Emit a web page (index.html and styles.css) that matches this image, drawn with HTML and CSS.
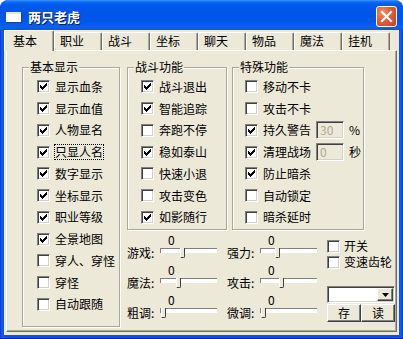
FILE: index.html
```html
<!DOCTYPE html>
<html lang="zh-CN">
<head>
<meta charset="utf-8">
<title>两只老虎</title>
<link rel="stylesheet" href="styles.css">
</head>
<body>
<svg class="defs" width="0" height="0" aria-hidden="true">
  <symbol id="check" viewBox="0 0 11 11">
    <path d="M8 2h1v1h-1z M7 3h2v1h-2z M2 4h1v1h-1z M6 4h3v1h-3z M2 5h2v1h-2z M5 5h3v1h-3z M2 6h5v1h-5z M3 7h3v1h-3z M4 8h1v1h-1z" fill="#000" shape-rendering="crispEdges"/>
  </symbol>
</svg>
<div class="window">
  <div class="titlebar">
    <span class="app-icon"></span>
    <span class="title">两只老虎</span>
    <span class="close">
      <svg width="19" height="19" viewBox="0 0 19 19"><path d="M5 5 L14 14 M14 5 L5 14" stroke="#fff" stroke-width="2.2" stroke-linecap="square"/></svg>
    </span>
  </div>
  <div class="client">
    <div class="tabs">
      <div class="tab active">基本</div>
      <div class="tab">职业</div>
      <div class="tab">战斗</div>
      <div class="tab">坐标</div>
      <div class="tab">聊天</div>
      <div class="tab">物品</div>
      <div class="tab">魔法</div>
      <div class="tab">挂机</div>
    </div>
    <div class="panel">
      <fieldset class="group g-basic">
        <legend>基本显示</legend>
        <div class="items">
          <div class="cb"><span class="box"><svg class="chk"><use href="#check"/></svg></span><span>显示血条</span></div>
          <div class="cb"><span class="box"><svg class="chk"><use href="#check"/></svg></span><span>显示血值</span></div>
          <div class="cb"><span class="box"><svg class="chk"><use href="#check"/></svg></span><span>人物显名</span></div>
          <div class="cb"><span class="box"><svg class="chk"><use href="#check"/></svg></span><span class="focus">只显人名</span></div>
          <div class="cb"><span class="box"><svg class="chk"><use href="#check"/></svg></span><span>数字显示</span></div>
          <div class="cb"><span class="box"><svg class="chk"><use href="#check"/></svg></span><span>坐标显示</span></div>
          <div class="cb"><span class="box"><svg class="chk"><use href="#check"/></svg></span><span>职业等级</span></div>
          <div class="cb"><span class="box"><svg class="chk"><use href="#check"/></svg></span><span>全景地图</span></div>
          <div class="cb"><span class="box"></span><span>穿人、穿怪</span></div>
          <div class="cb"><span class="box"></span><span>穿怪</span></div>
          <div class="cb"><span class="box"></span><span>自动跟随</span></div>
        </div>
      </fieldset>
      <div class="right">
        <div class="top">
          <fieldset class="group g-fight">
            <legend>战斗功能</legend>
            <div class="items">
              <div class="cb"><span class="box"><svg class="chk"><use href="#check"/></svg></span><span>战斗退出</span></div>
              <div class="cb"><span class="box"><svg class="chk"><use href="#check"/></svg></span><span>智能追踪</span></div>
              <div class="cb"><span class="box"></span><span>奔跑不停</span></div>
              <div class="cb"><span class="box"><svg class="chk"><use href="#check"/></svg></span><span>稳如泰山</span></div>
              <div class="cb"><span class="box"></span><span>快速小退</span></div>
              <div class="cb"><span class="box"></span><span>攻击变色</span></div>
              <div class="cb"><span class="box"><svg class="chk"><use href="#check"/></svg></span><span>如影随行</span></div>
            </div>
          </fieldset>
          <fieldset class="group g-special">
            <legend>特殊功能</legend>
            <div class="items">
              <div class="cb"><span class="box"></span><span>移动不卡</span></div>
              <div class="cb"><span class="box"></span><span>攻击不卡</span></div>
              <div class="cb"><span class="box"><svg class="chk"><use href="#check"/></svg></span><span>持久警告</span><span class="field">30</span><span class="unit">%</span></div>
              <div class="cb"><span class="box"><svg class="chk"><use href="#check"/></svg></span><span>清理战场</span><span class="field">0</span><span class="unit">秒</span></div>
              <div class="cb"><span class="box"><svg class="chk"><use href="#check"/></svg></span><span>防止暗杀</span></div>
              <div class="cb"><span class="box"></span><span>自动锁定</span></div>
              <div class="cb"><span class="box"></span><span>暗杀延时</span></div>
            </div>
          </fieldset>
        </div>
        <div class="bottom">
          <div class="sliders">
            <div class="slider">
              <span class="zero">0</span>
              <div class="srow"><span class="slabel">游戏:</span><span class="track"><span class="thumb" style="left:19px"></span></span></div>
            </div>
            <div class="slider">
              <span class="zero">0</span>
              <div class="srow"><span class="slabel">强力:</span><span class="track"><span class="thumb" style="left:14px"></span></span></div>
            </div>
            <div class="slider">
              <span class="zero">0</span>
              <div class="srow"><span class="slabel">魔法:</span><span class="track"><span class="thumb" style="left:15px"></span></span></div>
            </div>
            <div class="slider">
              <span class="zero">0</span>
              <div class="srow"><span class="slabel">攻击:</span><span class="track"><span class="thumb" style="left:18px"></span></span></div>
            </div>
            <div class="slider">
              <span class="zero">0</span>
              <div class="srow"><span class="slabel">粗调:</span><span class="track"><span class="thumb" style="left:0px"></span></span></div>
            </div>
            <div class="slider">
              <span class="zero">0</span>
              <div class="srow"><span class="slabel">微调:</span><span class="track"><span class="thumb" style="left:0px"></span></span></div>
            </div>
          </div>
          <div class="extra">
            <div class="cb small"><span class="box"></span><span>开关</span></div>
            <div class="cb small"><span class="box"></span><span>变速齿轮</span></div>
            <div class="combo"><span class="combo-text"></span><span class="combo-btn"><svg width="7" height="4" viewBox="0 0 7 4"><path d="M0 0h7L3.5 4z" fill="#000"/></svg></span></div>
            <div class="btns"><span class="btn">存</span><span class="btn">读</span></div>
          </div>
        </div>
      </div>
    </div>
  </div>
</div>
</body>
</html>
```

FILE: styles.css
```css
* { box-sizing: border-box; }
html, body { margin: 0; padding: 0; background: #fff; }
body {
  font-family: "Noto Sans CJK SC", "Noto Sans", sans-serif;
  font-size: 12px;
  color: #000;
}
.defs { position: absolute; width: 0; height: 0; overflow: hidden; }

.window {
  width: 403px;
  height: 339px;
  border-radius: 8px 8px 0 0;
  background: linear-gradient(to right, #0831d9 0, #1660ea 2px, #0b52e6 4px, #0b52e6 399px, #1660ea 401px, #0831d9 403px);
  box-shadow: inset 0 -1px 0 #0021b5;
  display: flex;
  flex-direction: column;
  overflow: hidden;
}

.titlebar {
  height: 30px;
  flex: none;
  display: flex;
  align-items: center;
  padding: 3px 0 0 6px;
  border-radius: 8px 8px 0 0;
  background: linear-gradient(to bottom, #3d95ff 0, #0a6af6 2px, #0058ee 5px, #0055e6 14px, #0057ea 22px, #0663f2 27px, #0a56e0 30px);
}
.app-icon {
  width: 15px;
  height: 10px;
  background: #fff;
  border-top: 2px solid #d9e6ff;
  box-shadow: 1px 1px 0 #1a3fa0;
}
.title {
  margin-left: 7px;
  color: #fff;
  font-weight: bold;
  font-size: 13px;
  line-height: 16px;
  text-shadow: 1px 1px 0 #0a1864;
}
.close {
  margin-left: auto;
  margin-right: 6px;
  width: 21px;
  height: 21px;
  border: 1px solid #fff;
  border-radius: 3px;
  background: radial-gradient(circle at 30% 30%, #f0906c 0, #e25a36 45%, #c9401c 100%);
  display: flex;
  align-items: center;
  justify-content: center;
}

.client {
  flex: 1;
  margin: 0 4px 4px;
  background: #ece9d8;
  padding: 0 2px 3px;
  display: flex;
  flex-direction: column;
}

.tabs {
  height: 20px;
  flex: none;
  display: flex;
  align-items: flex-end;
}
.tab {
  width: 48px;
  height: 18px;
  flex: none;
  border-top: 1px solid #fff;
  border-left: 1px solid #fff;
  border-right: 1px solid #716f64;
  box-shadow: inset -1px 0 0 #aca899;
  border-radius: 2px 2px 0 0;
  padding-left: 5px;
  line-height: 16px;
  white-space: nowrap;
}
.tab.active {
  width: 50px;
  height: 21px;
  margin-left: -2px;
  margin-bottom: -1px;
  position: relative;
  z-index: 1;
  background: #ece9d8;
  padding: 1px 0 0 8px;
  line-height: 18px;
}

.panel {
  flex: 1;
  border: 1px solid;
  border-color: #fff #716f64 #716f64 #fff;
  box-shadow: inset -1px -1px 0 #aca899;
  padding: 9px 0 0 15px;
  display: flex;
  gap: 7px;
  align-items: flex-start;
}

.group {
  margin: 0;
  padding: 0;
  min-width: 0;
  border: 1px solid #aca899;
  box-shadow: inset 1px 1px 0 #fff, 1px 1px 0 #fff;
}
.group legend {
  margin-left: 6px;
  padding: 0 1px;
  line-height: 14px;
  background: #ece9d8;
}
.items { padding-top: 2px; }
.g-basic { width: 98px; height: 267px; }
.g-basic .items { padding-left: 14px; }
.g-fight { width: 100px; height: 170px; }
.g-fight .items { padding-left: 13px; }
.g-special { width: 132px; height: 170px; }
.g-special .items { padding-left: 12px; }

.cb {
  display: flex;
  align-items: center;
  gap: 5px;
  height: 21.75px;
  white-space: nowrap;
  line-height: 14px;
}
.box {
  width: 13px;
  height: 13px;
  flex: none;
  background: #fff;
  border: 1px solid;
  border-color: #808080 #fff #fff #808080;
  box-shadow: inset 1px 1px 0 #404040, inset -1px -1px 0 #d4d0c8;
  display: block;
}
.chk { display: block; width: 11px; height: 11px; }
.focus { outline: 1px dotted #000; outline-offset: 0; }

.field {
  width: 28px;
  height: 18px;
  flex: none;
  border: 1px solid;
  border-color: #808080 #fff #fff #808080;
  box-shadow: inset 1px 1px 0 #404040, inset -1px -1px 0 #d4d0c8;
  color: #aca899;
  padding: 1px 0 0 3px;
  line-height: 14px;
}

.right {
  width: 269px;
  display: flex;
  flex-direction: column;
}
.top { display: flex; gap: 5px; }

.bottom {
  display: flex;
  gap: 10px;
}
.sliders {
  display: grid;
  grid-template-columns: 100px 90px;
  row-gap: 2px;
  padding-top: 4px;
}
.slider { display: flex; flex-direction: column; }
.zero {
  height: 11px;
  line-height: 12px;
  padding-left: 41px;
}
.srow {
  height: 16px;
  display: flex;
  align-items: flex-start;
}
.slabel {
  width: 33px;
  flex: none;
  line-height: 16px;
}
.track {
  position: relative;
  width: 57px;
  height: 5px;
  margin-top: 3px;
  background: #fff;
  border-top: 1px solid #808080;
  border-left: 1px solid #808080;
}
.thumb {
  position: absolute;
  top: -1px;
  width: 5px;
  height: 10px;
  background: #ece9d8;
  border-left: 1px solid #fff;
  border-right: 1px solid #404040;
  border-bottom: 1px solid #404040;
  border-bottom-right-radius: 2px;
}

.extra {
  width: 68px;
  padding-top: 8px;
  display: flex;
  flex-direction: column;
}
.cb.small { height: 16px; gap: 4px; }
.combo {
  margin-top: 16px;
  height: 17px;
  background: #fff;
  border: 1px solid;
  border-color: #808080 #fff #fff #808080;
  box-shadow: inset 1px 1px 0 #404040, inset -1px -1px 0 #d4d0c8;
  display: flex;
  justify-content: flex-end;
  padding: 1px 1px 1px 0;
}
.combo-btn {
  width: 16px;
  height: 13px;
  background: #ece9d8;
  border: 1px solid;
  border-color: #fff #404040 #404040 #fff;
  box-shadow: inset -1px -1px 0 #808080;
  display: flex;
  align-items: center;
  justify-content: center;
}
.btns {
  margin-top: 1px;
  display: flex;
}
.btn {
  flex: 1;
  height: 18px;
  border: 1px solid;
  border-color: #fff #404040 #404040 #fff;
  box-shadow: inset -1px -1px 0 #808080;
  text-align: center;
  line-height: 15px;
}
```
